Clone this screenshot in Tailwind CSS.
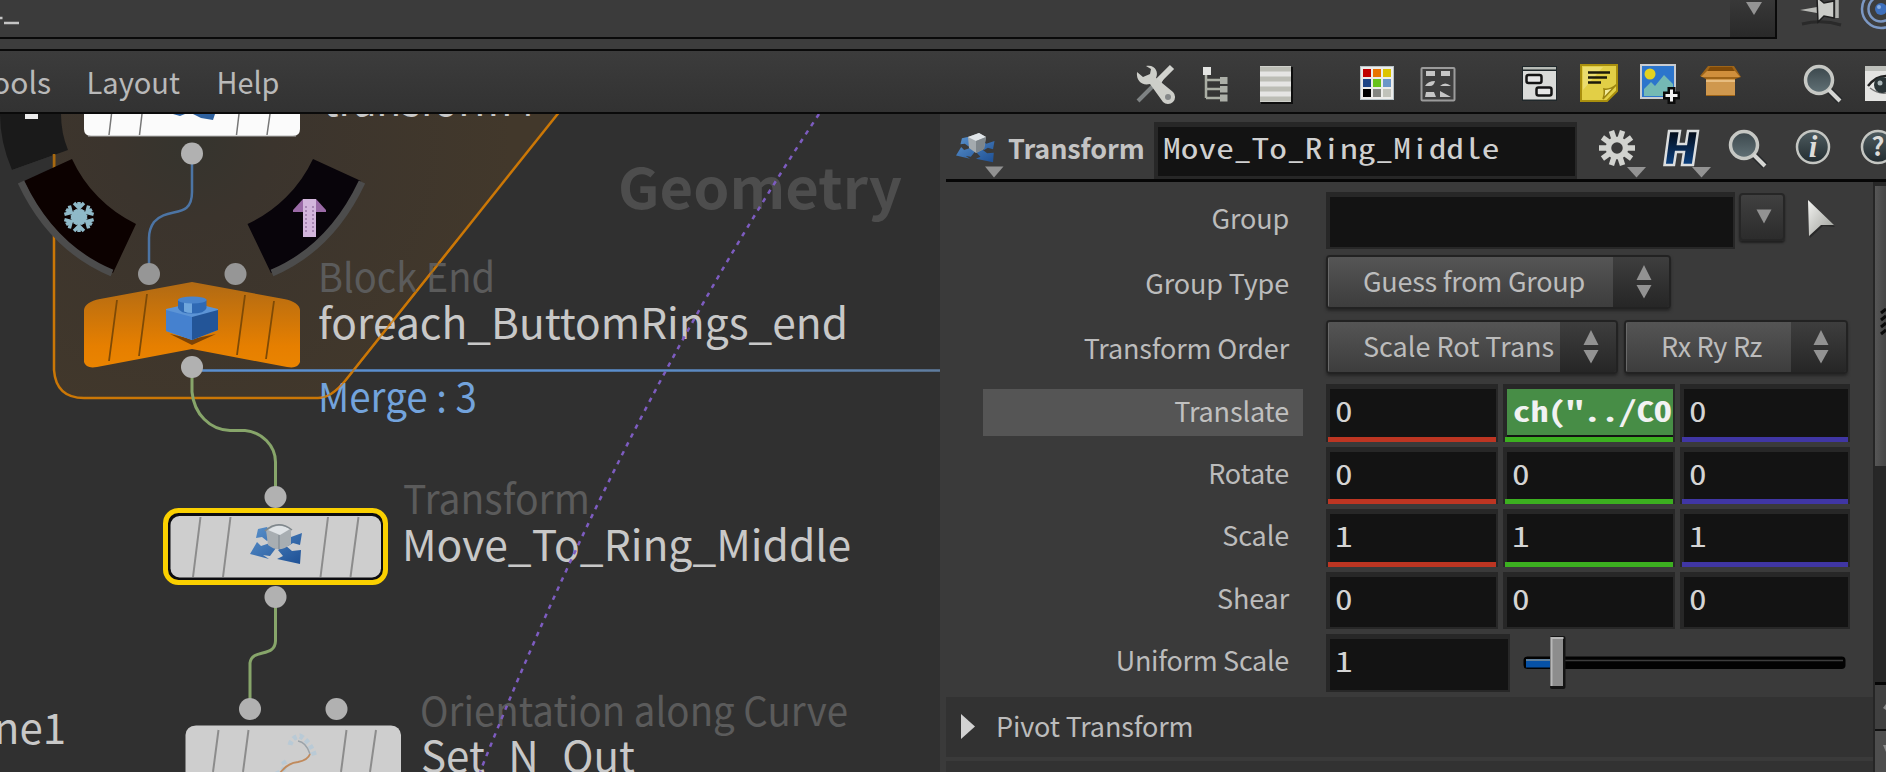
<!DOCTYPE html>
<html lang="en">
<head>
<meta charset="utf-8">
<title>Network editor</title>
<script src="https://cdn.jsdelivr.net/npm/@tailwindcss/browser@4"></script>
</head>
<body class="w-[1886px] h-[772px] overflow-hidden bg-[#303030] flex flex-col font-['Noto_Sans_CJK_SC','Noto_Sans',sans-serif] text-[#bcbcbc]">

<svg class="absolute w-0 h-0">
  <defs>
    <linearGradient id="lens" x1="0" y1="0" x2="0" y2="1"><stop offset="0" stop-color="#3b474c"/><stop offset="1" stop-color="#627277"/></linearGradient>
    <linearGradient id="disc" x1="0" y1="0" x2="0" y2="1"><stop offset="0" stop-color="#4e5c60"/><stop offset="1" stop-color="#222c30"/></linearGradient>
    <linearGradient id="navy" x1="0" y1="0" x2="0" y2="1"><stop offset="0" stop-color="#050c18"/><stop offset="1" stop-color="#0b4080"/></linearGradient>
    <linearGradient id="metal" x1="0" y1="0" x2="1" y2="1"><stop offset="0" stop-color="#f4f4f2"/><stop offset="1" stop-color="#999b95"/></linearGradient>
    <linearGradient id="steel" x1="0" y1="0" x2="1" y2="1"><stop offset="0" stop-color="#5a92cc"/><stop offset="1" stop-color="#1d4f94"/></linearGradient>
    <symbol id="updown" viewBox="0 0 16 34"><path d="M8 0L15.5 15H.5zM.5 20h15L8 33.500z" fill="#929292"/></symbol>
    <symbol id="search" viewBox="0 0 40 40"><path d="M25 25L37 37" stroke="#26282a" stroke-width="7"/><circle cx="16" cy="16" r="13.500" fill="url(#lens)" stroke="#c6c8c4" stroke-width="3.500"/><path d="M25.500 25.500L37 37" stroke="#d4d5d2" stroke-width="4"/></symbol>
    <symbol id="xform" viewBox="0 0 54 42" preserveAspectRatio="none">
      <path d="M8 6L17 4 23 14 17 18 12 14 6 15zM52 10L50 22 43 20 38 23 34 14 38 12 41 14zM0 31L7 19 11 23 20 20 26 25 20 33 13 32 19 36zM50 41L27 36 33 33 28 27 35 22 42 28 51 27z" fill="url(#steel)"/>
    </symbol>
  </defs>
</svg>

<!-- path bar -->
<header class="h-[51px] shrink-0 flex items-start bg-[#3d3d3d] border-b-2 border-[#0a0a0a]">
  <div class="w-[1777px] h-[39px] flex justify-between border-b-2 border-r-2 border-[#0a0a0a] bg-[#3b3b3b] overflow-hidden">
    <svg class="w-6 h-[37px]" viewBox="0 0 24 37"><path d="M0 18h2.500M4 23h15" stroke="#c4c4c4" stroke-width="2.500"/></svg>
    <div class="w-[45px] h-[37px] bg-linear-to-b from-[#383838] to-[#292929] flex justify-center">
      <svg class="w-4 h-4 ml-0.5" viewBox="0 0 16 16"><path d="M0 2h16L8 15z" fill="#939393"/></svg>
    </div>
  </div>
  <svg class="w-[109px] h-[49px] shrink-0" viewBox="1777 0 109 49">
    <path d="M1802 24q20-5 39 1" stroke="#2a2a2a" stroke-width="3" fill="none"/>
    <path d="M1800 10L1817 7v6z" fill="#b9bab6"/>
    <path d="M1817 -3L1824 3 1834 1V18L1824 16 1818 22z" fill="#cbccc8" stroke="#1e1e1e" stroke-width="1.500"/><path d="M1837 0v18" stroke="#b3b4b0" stroke-width="3.500"/>
    <circle cx="1881" cy="9" r="19" fill="none" stroke="#7c98c4" stroke-width="2.500"/><circle cx="1881" cy="9" r="12.500" fill="none" stroke="#7c98c4" stroke-width="2.500"/><circle cx="1881" cy="9" r="6" fill="#3f70bc"/><circle cx="1879" cy="7" r="2" fill="#87aee2"/>
  </svg>
</header>

<!-- menu bar -->
<nav class="h-[63px] shrink-0 flex items-start bg-linear-to-b from-[#3c3c3c] to-[#323232] border-b-2 border-[#0a0a0a]">
  <svg class="w-[1886px] h-[61px]" viewBox="0 51 1886 61">
    <g font-family="'Noto Sans CJK SC','Noto Sans',sans-serif" font-size="30" fill="#b9b9b9">
      <text x="51" y="94" text-anchor="end">Tools</text>
      <text x="86.500" y="94" textLength="93.500" lengthAdjust="spacingAndGlyphs">Layout</text>
      <text x="216.500" y="94" textLength="63" lengthAdjust="spacingAndGlyphs">Help</text>
    </g>
    <!-- wrench and screwdriver -->
    <path d="M1138 101L1153 86" stroke="#7e8283" stroke-width="4"/>
    <path d="M1172 67L1156 83" stroke="#d2d3cf" stroke-width="6"/>
    <path d="M1154 84L1166 74 1160 86z" fill="#d2d3cf"/>
    <path d="M1146 66C1155 64 1159 72 1156 78L1173 92A7 7 0 0 1 1163 102L1150 84C1142 86 1136 81 1137 72L1143 77 1150 74 1151 69z" fill="#cdcec9"/>
    <circle cx="1168" cy="97" r="3" fill="#85888a"/>
    <!-- tree -->
    <path d="M1206 74V98M1206 80h14M1206 89h14M1206 98h14" stroke="#aaaea4" stroke-width="2.500" fill="none"/>
    <rect x="1203" y="67" width="8" height="8" fill="#e3e4e2"/><path d="M1220 77h7.500v7h-7.500zM1220 86h7.500v6.500h-7.500zM1220 94.500h7.500v7h-7.500z" fill="#acafa8"/>
    <!-- list -->
    <rect x="1261" y="67" width="32" height="37" fill="#0e0e0e"/><rect x="1260" y="66" width="31" height="36" fill="#e5e5e3"/>
    <path d="M1260 69h31M1260 79h31M1260 89h31M1260 99h31" stroke="#bcbdb5" stroke-width="5"/>
    <!-- palette -->
    <rect x="1360.500" y="66.500" width="33" height="33" fill="#ececea" stroke="#b9c4c9"/>
    <g>
      <rect x="1363" y="69" width="8" height="8" fill="#c00000"/><rect x="1373" y="69" width="8" height="8" fill="#e87400"/><rect x="1383" y="69" width="8" height="8" fill="#dcc400"/>
      <rect x="1363" y="79" width="8" height="8" fill="#1e4586"/><rect x="1373" y="79" width="8" height="8" fill="#66c21a"/><rect x="1383" y="79" width="8" height="8" fill="#6a96c8"/>
      <rect x="1363" y="89" width="8" height="8" fill="#000"/><rect x="1373" y="89" width="8" height="8" fill="#838580"/><rect x="1383" y="89" width="8" height="8" fill="#c0c2ba"/>
    </g>
    <!-- thumbnails -->
    <rect x="1421.500" y="68" width="33" height="32.500" rx="1" fill="#3e3e3e" stroke="#9b9b9b" stroke-width="2"/>
    <path d="M1426 71h9v5h-9zM1441 71h9v5h-9zM1425 86q3-5 10-5-1 5-5 5zM1440 86q5-5 11 0zM1426 92h8l2 5h-11zM1440 91l11 6h-11z" fill="#c6c6c6"/>
    <!-- network box -->
    <rect x="1522" y="66" width="35" height="35" fill="#20282b"/><rect x="1523" y="67" width="33" height="2.500" fill="#b7bbb6"/><rect x="1523" y="71" width="33" height="28.500" fill="#dadbd9"/>
    <rect x="1526.500" y="75" width="15" height="8" rx="2" fill="#e6e6e6" stroke="#141414" stroke-width="2.500"/><rect x="1536.500" y="87.500" width="15" height="8" rx="2" fill="#e6e6e6" stroke="#141414" stroke-width="2.500"/>
    <!-- sticky note -->
    <path d="M1581 65h36v26l-10 10h-26z" fill="#e2cf46" stroke="#a98f0e" stroke-width="2"/><path d="M1583 67h20L1583 90z" fill="#f0e588" opacity=".6"/><path d="M1603 99q2-6 1-10 6 1 12-4z" fill="#f2eb9d" stroke="#9b8410" stroke-width="1.500"/>
    <path d="M1588 72.500h22M1588 77.500h19M1588 82.500h13" stroke="#1c1a0a" stroke-width="2.500"/>
    <!-- picture -->
    <rect x="1641" y="65" width="34" height="33" fill="#2c75cc" stroke="#c9ccd0" stroke-width="2"/><circle cx="1650" cy="74" r="5.500" fill="#e3d220"/><path d="M1644 96V89L1651 82 1655 86 1664 75 1673 84V96z" fill="#74b9b4"/>
    <path d="M1671.500 87v17M1663 95.500h17" stroke="#0b0b0b" stroke-width="8"/><path d="M1671.500 89.500v12M1665.500 95.500h12" stroke="#f0f0f0" stroke-width="3"/>
    <!-- crate -->
    <path d="M1708 66h26l7 11-6 2v17h-29v-17l-6-3z" fill="#9e6418"/><path d="M1710 67h22l3 5h-28z" fill="#7e4908"/><path d="M1707 71h28l5 6H1701z" fill="#d08f3c"/><rect x="1706" y="79" width="29" height="16" fill="#cf984e"/><path d="M1706 81h29" stroke="#e7bd80" stroke-width="2"/>
    <svg x="1803" y="64" width="40" height="40"><use href="#search"/></svg>
    <!-- eye panel -->
    <rect x="1865" y="66" width="21" height="35" fill="#e4e4e2"/><rect x="1865" y="66" width="21" height="5" fill="#bdbfba"/>
    <path d="M1868 86q8-10 18-10" stroke="#222" stroke-width="2.500" fill="none"/><path d="M1870 88q8 6 16 5" stroke="#777" stroke-width="1.500" fill="none"/><circle cx="1882" cy="85" r="8" fill="#2a3436"/><circle cx="1880" cy="83" r="2.500" fill="#a8b4b6"/>
  </svg>
</nav>

<main class="flex h-[658px]">
  <!-- node graph -->
  <svg class="w-[940px] h-[658px] shrink-0 bg-[#303030]" viewBox="0 114 940 658" font-family="'Noto Sans CJK SC','Noto Sans',sans-serif">
    <defs>
      <radialGradient id="halo" gradientUnits="userSpaceOnUse" cx="192" cy="140" r="320"><stop offset="0" stop-color="#35342e"/><stop offset=".25" stop-color="#3b342d"/><stop offset="1" stop-color="#42382b"/></radialGradient>
      <linearGradient id="orange" x1="0" y1="0" x2="0" y2="1"><stop offset="0" stop-color="#b06a14"/><stop offset=".75" stop-color="#e67f00"/><stop offset="1" stop-color="#ea8400"/></linearGradient>
      <linearGradient id="wire" gradientUnits="userSpaceOnUse" x1="600" y1="0" x2="940" y2="0"><stop offset="0" stop-color="#5a8fd0"/><stop offset="1" stop-color="#5f7c9e"/></linearGradient>
    </defs>

    <path d="M54 100V370Q56 398 84 398H318Q331 398 345 381L568 101z" fill="url(#halo)" stroke="#cb7706" stroke-width="2.500"/>

    <!-- radial menu wedges -->
    <path d="M0 114H61Q61 133 68 150L12 170Q0 142 0 114z" fill="#1a1a1a"/>
    <path d="M12 170L54 155V167L24 181z" fill="#303030"/><path d="M54 154v14" stroke="#a8690f" stroke-width="2.500"/>
    <rect x="25" y="112" width="13" height="7" fill="#ececec"/>
    <path d="M24 181L72 159A134 134 0 0 0 136 224L113 273A188 188 0 0 1 24 181z" fill="#0c0100"/>
    <path d="M21 182Q52 248 112 273" fill="none" stroke="#4c4c4c" stroke-width="7"/>
    <path d="M361 181L313 159A134 134 0 0 1 247.500 224L271 273A188 188 0 0 0 361 181z" fill="#08040a"/>
    <path d="M362 182Q331 248 272 273" fill="none" stroke="#4c4c4c" stroke-width="7"/>

    <!-- freeze -->
    <g stroke="#8fb9c8" stroke-width="3.500" fill="none" transform="translate(79 217)">
      <path id="arm" d="M0 0V-15M-5-14L0-9 5-14M-4-7L0-3 4-7"/>
      <use href="#arm" transform="rotate(60)"/><use href="#arm" transform="rotate(120)"/><use href="#arm" transform="rotate(180)"/><use href="#arm" transform="rotate(240)"/><use href="#arm" transform="rotate(300)"/>
    </g>
    <!-- up arrow -->
    <path d="M303 199h13l10 11v2h-33v-2z" fill="#9a6aa6"/><path d="M303 199h13v38h-13z" fill="#d3b6dc"/><path d="M306 206v28M313 206v28" stroke="#9b7aa6" stroke-width="1.500" stroke-dasharray="2 2"/>

    <path d="M192 160V192C192 220 168 206 154 222Q149 229 149 238V268" fill="none" stroke="#4c74a4" stroke-width="2.500"/>
    <path d="M202 370.500H940" stroke="url(#wire)" stroke-width="2.500"/>
    <path d="M192 375V392C194 414 210 430 230 430.500H245C262 432 275.500 446 275.500 462V490M275.500 605V641C275 658 252 648 250 663V702" fill="none" stroke="#87a56a" stroke-width="3"/>

    <!-- clipped node -->
    <path d="M84 105H300V129Q300 136 293 136H91Q84 136 84 129z" fill="#fbfbfb"/><path d="M88 136H296" stroke="#b5b5b5"/>
    <path d="M111.500 114L109 135M142 114L139.500 135M239 114L236.500 135M270 114L267 135" stroke="#777" stroke-width="1.500"/>
    <path d="M173 114h12l-5 2zM193 114h22l-2 6-12-2z" fill="#2e619f"/>

    <!-- block end node -->
    <path d="M84 310Q85 302 100 299L192 282 284 299Q299 302 300 310V362Q298 369 287 367L192 349 97 367Q86 369 84 362z" fill="url(#orange)"/>
    <path d="M117 300L109 361M147 294L139 356M245 295L237 355M274 301L266 359" stroke="#7e4a06" stroke-width="1.800"/>
    <path d="M170 334L192 345 216 334 192 339z" fill="#7c4306"/>
    <path d="M166 309L179 306 192 304 206 306 218 309V330L192 340 166 331z" fill="#5c94d6"/><path d="M166 310L192 317V340L166 331z" fill="#4581cf"/><path d="M218 310L192 317V340L218 330z" fill="#235598"/>
    <path d="M178 300V308Q180 313.500 192 313.500 205 313.500 206.500 308V300z" fill="#2f69b4"/><path d="M184 302h8v11q-5 0-8-1.500z" fill="#6fa6dd"/><ellipse cx="192.300" cy="300" rx="14.300" ry="3.500" fill="#4a84cb"/>

    <!-- selected transform node -->
    <rect x="165.500" y="510.500" width="220" height="72" rx="13" fill="#0c0c10" stroke="#fad000" stroke-width="5"/>
    <rect x="170.500" y="516" width="210.500" height="61.500" rx="9" fill="#cecece"/>
    <path d="M200.500 517L193 577M230.500 517L223 577M328 517L320.500 577M358.500 517L350.500 577" stroke="#8c8c8c" stroke-width="2"/>
    <svg x="250" y="523" width="54" height="42"><use href="#xform"/></svg>
    <path d="M266 530Q278 519 291 530V544Q279 554 268 545z" fill="#a8aeb2"/><path d="M268 530Q279 522 290 529L280 535z" fill="#dfe3e6"/><path d="M279 535V549" stroke="#8a9298" stroke-width="1.500"/><path d="M265 531Q278 519 292 530" stroke="#7f878c" stroke-width="1.500" fill="none"/>

    <!-- orientation node -->
    <path d="M185.500 780V735Q186 726 196 725.500H391Q400 726 401 735V780z" fill="#cecece"/>
    <path d="M218.500 730L213 772M248.500 730L243 772M346.500 730L341 772M376 730L370 772" stroke="#8c8c8c" stroke-width="2"/>
    <path d="M276 774Q290 768 282 760 M290 745Q292 737 300 736 311 742 315 757" fill="none" stroke="#b9cad6" stroke-width="5" stroke-dasharray="4 3"/><path d="M278 776Q286 763 298 762 308 760 310 754" fill="none" stroke="#c08a5c" stroke-width="1.800"/><path d="M310 754Q306 742 298 741" fill="none" stroke="#9ba3a9" stroke-width="1.500"/>

    <g fill="#b1b1b1"><circle cx="192" cy="153.500" r="11"/><circle cx="149" cy="274" r="11" fill="#969696"/><circle cx="235.500" cy="274" r="11" fill="#969696"/><circle cx="192" cy="367" r="11"/><circle cx="275.500" cy="497" r="11"/><circle cx="275.500" cy="597" r="11"/><circle cx="250" cy="709" r="11"/><circle cx="336.500" cy="709" r="11"/></g>

    <text x="618" y="208.500" font-size="56" font-weight="700" fill="#4d4d4d" textLength="284" lengthAdjust="spacingAndGlyphs">Geometry</text>
    <g font-size="42" fill="#c8c8c8">
      <text x="323" y="116" textLength="212" lengthAdjust="spacingAndGlyphs">transform4</text>
      <text x="318" y="339" textLength="530" lengthAdjust="spacingAndGlyphs">foreach_ButtomRings_end</text>
      <text x="402" y="561" textLength="449" lengthAdjust="spacingAndGlyphs">Move_To_Ring_Middle</text>
      <text x="421" y="772" textLength="214" lengthAdjust="spacingAndGlyphs">Set_N_Out</text>
      <text x="66" y="744" text-anchor="end">Plane1</text>
    </g>
    <g font-size="40" fill="#5b5b5b">
      <text x="318" y="291.500" textLength="177" lengthAdjust="spacingAndGlyphs">Block End</text>
      <text x="403" y="514" textLength="187" lengthAdjust="spacingAndGlyphs">Transform</text>
      <text x="420" y="726" textLength="428" lengthAdjust="spacingAndGlyphs">Orientation along Curve</text>
      <text x="318" y="411.500" fill="#73a3dc" textLength="159" lengthAdjust="spacingAndGlyphs">Merge : 3</text>
    </g>
    <path d="M458 239L345 381Q331 398 318 398" fill="none" stroke="#cb7706" stroke-width="2" opacity=".75"/>
    <path d="M819 114Q624 409 480 772" fill="none" stroke="#7d5cc0" stroke-width="2.500" stroke-dasharray="4.500 5.500"/>
  </svg>

  <!-- parameter panel -->
  <section class="w-[946px] flex flex-col bg-[#3a3a3a]">
    <div class="ml-1.5 h-[68px] shrink-0 flex items-start border-b-[3px] border-[#060606]">
      <svg class="w-[62px] h-[65px] shrink-0" viewBox="946 114 62 65">
        <svg x="956" y="134" width="40" height="29"><use href="#xform"/></svg>
        <path d="M968 137L979 133 986 137 984 149 976 153 969 148z" fill="#a3aaae"/><path d="M968 137L979 133 986 137 976 141z" fill="#dfe4e7"/><path d="M976 141L986 137 984 149 976 153z" fill="#7e868b"/>
        <path d="M985 166.500h18.500L994 177.500z" fill="#929292"/>
      </svg>
      <div class="w-[146px] pt-[13px] text-[27px] leading-[42px] font-bold text-[#c4c4c4] tracking-[-0.1px]">Transform</div>
      <div class="w-[423px] h-[57px] mt-2 pl-1 pt-[5px] pr-0.5 pb-[3px] bg-[#272727]">
        <div class="h-full bg-[#131313] pl-[5px] font-['Noto_Sans_Mono_CJK_SC','DejaVu_Sans_Mono','Liberation_Mono',monospace] text-[28px] leading-[41px] text-[#d0d0d0] whitespace-nowrap"><span class="inline-block origin-left scale-x-[1.265]">Move_To_Ring_Middle</span></div>
      </div>
      <svg class="w-[309px] h-[65px] shrink-0" viewBox="1577 114 309 65">
        <g stroke="#d2d3cf" stroke-width="5.500" transform="translate(1617 148)">
          <path id="tooth" d="M0-9V-18" transform="rotate(18)"/><use href="#tooth" transform="rotate(36)"/><use href="#tooth" transform="rotate(72)"/><use href="#tooth" transform="rotate(108)"/><use href="#tooth" transform="rotate(144)"/><use href="#tooth" transform="rotate(180)"/><use href="#tooth" transform="rotate(216)"/><use href="#tooth" transform="rotate(252)"/><use href="#tooth" transform="rotate(288)"/><use href="#tooth" transform="rotate(324)"/>
          <circle r="8.500" fill="none"/>
        </g>
        <path d="M1627 167h19L1636.500 177.500z" fill="#939393"/>
        <path d="M1669 131H1680L1678 144H1686L1688 131H1698L1693 165H1682L1684 152H1676L1674 165H1664.500z" fill="url(#navy)" stroke="#dcdedf" stroke-width="2.500"/>
        <path d="M1692 167h19L1701.500 177.500z" fill="#939393"/>
        <svg x="1728" y="129" width="40" height="40"><use href="#search"/></svg>
        <circle cx="1813" cy="147" r="16" fill="url(#disc)" stroke="#c4c6c2" stroke-width="2.500"/>
        <text x="1813" y="157" text-anchor="middle" font-family="'Liberation Serif',serif" font-weight="700" font-style="italic" font-size="31" fill="#dcdcda">i</text>
        <circle cx="1878" cy="147" r="16" fill="url(#disc)" stroke="#c4c6c2" stroke-width="2.500"/>
        <text x="1878" y="156" text-anchor="middle" font-family="'Noto Sans CJK SC',sans-serif" font-weight="700" font-size="25" fill="#dcdcda">?</text>
      </svg>
    </div>

    <div class="flex flex-1 min-h-0">
      <div class="w-[933px] flex flex-col text-[27px] tracking-[-0.15px]">
        <!-- group -->
        <div class="mt-[10px] h-[57px] shrink-0 flex">
          <div class="w-[349px] mr-[37px] text-right leading-[52px]">Group</div>
          <div class="w-[409px] pl-1 pt-[5px] pr-0.5 pb-0.5 bg-[#272727]"><div class="h-full bg-[#131313]"></div></div>
          <div class="ml-1 mt-px w-[46px] h-[48px] rounded-sm border-2 border-[#262626] shadow-[0_2px_2px_#202020] bg-linear-to-b from-[#404040] to-[#2c2c2c] flex justify-center">
            <svg class="w-4 h-[30px] mt-2 ml-[3px]" viewBox="0 0 16 30"><path d="M.500 6.500h15L8 20.500z" fill="#929292"/></svg>
          </div>
          <svg class="ml-[22px] mt-[7px] w-8 h-10" viewBox="0 0 32 40"><path d="M2 3L28 28 16 27 3 39z" fill="#222" opacity=".7"/><path d="M1 1L27 26 14 26 2 37z" fill="url(#metal)"/></svg>
        </div>
        <!-- group type -->
        <div class="mt-1.5 h-[54px] shrink-0 flex">
          <div class="w-[349px] mr-[37px] text-right leading-[56px]">Group Type</div>
          <div class="w-[345px] rounded-sm border-2 border-[#222] shadow-[0_2px_3px_#262626] flex overflow-hidden">
            <div class="w-[285px] pl-[34px] leading-[47px] tracking-[-0.25px] whitespace-nowrap bg-linear-to-b from-[#555] to-[#3d3d3d] border-l border-[#6a6a6a]">Guess from Group</div>
            <div class="flex-1 flex items-center justify-center bg-linear-to-b from-[#3e3e3e] to-[#262626]"><svg class="w-4 h-[34px] ml-[5px]"><use href="#updown"/></svg></div>
          </div>
        </div>
        <!-- transform order -->
        <div class="mt-[11px] h-[54px] shrink-0 flex">
          <div class="w-[349px] mr-[37px] text-right leading-[56px]">Transform Order</div>
          <div class="w-[292px] rounded-sm border-2 border-[#222] shadow-[0_2px_3px_#262626] flex overflow-hidden">
            <div class="w-[232px] pl-[34px] leading-[47px] tracking-normal whitespace-nowrap bg-linear-to-b from-[#555] to-[#3d3d3d] border-l border-[#6a6a6a]">Scale Rot Trans</div>
            <div class="flex-1 flex items-center justify-center bg-linear-to-b from-[#3e3e3e] to-[#262626]"><svg class="w-4 h-[34px] ml-[5px]"><use href="#updown"/></svg></div>
          </div>
          <div class="ml-1.5 w-[224px] rounded-sm border-2 border-[#222] shadow-[0_2px_3px_#262626] flex overflow-hidden">
            <div class="w-[165px] pl-[34px] leading-[47px] tracking-[-0.3px] whitespace-nowrap bg-linear-to-b from-[#555] to-[#3d3d3d] border-l border-[#6a6a6a]">Rx Ry Rz</div>
            <div class="flex-1 flex items-center justify-center bg-linear-to-b from-[#3e3e3e] to-[#262626]"><svg class="w-4 h-[34px] ml-[5px]"><use href="#updown"/></svg></div>
          </div>
        </div>

        <div class="mt-[10px] flex flex-col gap-[5px]">
          <!-- translate -->
          <div class="h-[57.5px] shrink-0 flex">
            <div class="ml-[43px] mt-[5px] w-[320px] h-[47px] mr-[23px] pr-[14px] bg-[#555] text-right leading-[43px] text-[#c0c0c0]">Translate</div>
            <div class="flex gap-[5px] tracking-normal font-['Noto_Sans_Mono_CJK_SC','DejaVu_Sans_Mono','Liberation_Mono',monospace] text-[28px] leading-[43px] text-[#d4d4d4]">
              <div class="w-[172px] pl-1 pt-[5px] pr-0.5 bg-[#272727] flex flex-col"><div class="flex-1 bg-[#131313] pl-[5px]"><span class="inline-block origin-left scale-x-[1.26]">0</span></div><div class="h-[5px] -ml-0.5 bg-[#bd3522]"></div></div>
              <div class="w-[172px] pl-1 pt-[5px] pr-0.5 bg-[#272727] flex flex-col"><div class="flex-1 border-b-2 border-[#131313] bg-[#478d46] pl-[6px] overflow-hidden font-bold text-[#f2f2f2] whitespace-nowrap"><span class="inline-block origin-left scale-x-[1.26]">ch("../CO</span></div><div class="h-[5px] -ml-0.5 bg-[#3cb020]"></div></div>
              <div class="w-[170px] pl-1 pt-[5px] pr-0.5 bg-[#272727] flex flex-col"><div class="flex-1 bg-[#131313] pl-[5px]"><span class="inline-block origin-left scale-x-[1.26]">0</span></div><div class="h-[5px] -ml-0.5 bg-[#4036a4]"></div></div>
            </div>
          </div>
          <!-- rotate -->
          <div class="h-[57.5px] shrink-0 flex">
            <div class="w-[349px] mr-[37px] text-right leading-[52px]">Rotate</div>
            <div class="flex gap-[5px] tracking-normal font-['Noto_Sans_Mono_CJK_SC','DejaVu_Sans_Mono','Liberation_Mono',monospace] text-[28px] leading-[43px] text-[#d4d4d4]">
              <div class="w-[172px] pl-1 pt-[5px] pr-0.5 bg-[#272727] flex flex-col"><div class="flex-1 bg-[#131313] pl-[5px]"><span class="inline-block origin-left scale-x-[1.26]">0</span></div><div class="h-[5px] -ml-0.5 bg-[#bd3522]"></div></div>
              <div class="w-[172px] pl-1 pt-[5px] pr-0.5 bg-[#272727] flex flex-col"><div class="flex-1 bg-[#131313] pl-[5px]"><span class="inline-block origin-left scale-x-[1.26]">0</span></div><div class="h-[5px] -ml-0.5 bg-[#3cb020]"></div></div>
              <div class="w-[170px] pl-1 pt-[5px] pr-0.5 bg-[#272727] flex flex-col"><div class="flex-1 bg-[#131313] pl-[5px]"><span class="inline-block origin-left scale-x-[1.26]">0</span></div><div class="h-[5px] -ml-0.5 bg-[#4036a4]"></div></div>
            </div>
          </div>
          <!-- scale -->
          <div class="h-[57.5px] shrink-0 flex">
            <div class="w-[349px] mr-[37px] text-right leading-[52px]">Scale</div>
            <div class="flex gap-[5px] tracking-normal font-['Noto_Sans_Mono_CJK_SC','DejaVu_Sans_Mono','Liberation_Mono',monospace] text-[28px] leading-[43px] text-[#d4d4d4]">
              <div class="w-[172px] pl-1 pt-[5px] pr-0.5 bg-[#272727] flex flex-col"><div class="flex-1 bg-[#131313] pl-[5px]"><span class="inline-block origin-left scale-x-[1.26]">1</span></div><div class="h-[5px] -ml-0.5 bg-[#bd3522]"></div></div>
              <div class="w-[172px] pl-1 pt-[5px] pr-0.5 bg-[#272727] flex flex-col"><div class="flex-1 bg-[#131313] pl-[5px]"><span class="inline-block origin-left scale-x-[1.26]">1</span></div><div class="h-[5px] -ml-0.5 bg-[#3cb020]"></div></div>
              <div class="w-[170px] pl-1 pt-[5px] pr-0.5 bg-[#272727] flex flex-col"><div class="flex-1 bg-[#131313] pl-[5px]"><span class="inline-block origin-left scale-x-[1.26]">1</span></div><div class="h-[5px] -ml-0.5 bg-[#4036a4]"></div></div>
            </div>
          </div>
          <!-- shear -->
          <div class="h-[57.5px] shrink-0 flex">
            <div class="w-[349px] mr-[37px] text-right leading-[52px]">Shear</div>
            <div class="flex gap-[5px] tracking-normal font-['Noto_Sans_Mono_CJK_SC','DejaVu_Sans_Mono','Liberation_Mono',monospace] text-[28px] leading-[43px] text-[#d4d4d4]">
              <div class="w-[172px] pl-1 pt-[5px] pr-0.5 pb-0.5 bg-[#272727]"><div class="h-full bg-[#131313] pl-[5px]"><span class="inline-block origin-left scale-x-[1.26]">0</span></div></div>
              <div class="w-[172px] pl-1 pt-[5px] pr-0.5 pb-0.5 bg-[#272727]"><div class="h-full bg-[#131313] pl-[5px]"><span class="inline-block origin-left scale-x-[1.26]">0</span></div></div>
              <div class="w-[170px] pl-1 pt-[5px] pr-0.5 pb-0.5 bg-[#272727]"><div class="h-full bg-[#131313] pl-[5px]"><span class="inline-block origin-left scale-x-[1.26]">0</span></div></div>
            </div>
          </div>
          <!-- uniform scale -->
          <div class="h-[57.5px] shrink-0 flex">
            <div class="w-[349px] mr-[37px] text-right leading-[52px] tracking-[-0.3px]">Uniform Scale</div>
            <div class="w-[184px] pl-1 pt-[5px] pr-0.5 pb-0.5 bg-[#272727] tracking-normal font-['Noto_Sans_Mono_CJK_SC','DejaVu_Sans_Mono','Liberation_Mono',monospace] text-[28px] leading-[43px] text-[#d4d4d4]"><div class="h-full bg-[#131313] pl-[5px]"><span class="inline-block origin-left scale-x-[1.26]">1</span></div></div>
            <svg class="ml-3 w-[326px] h-[57px]" viewBox="1522 634 326 57">
              <rect x="1523.500" y="656.500" width="322" height="12.500" rx="4" fill="#020202"/><path d="M1565 660.500h278" stroke="#3c3c3c" stroke-width="1.500"/>
              <rect x="1526" y="659" width="25" height="8.500" fill="#0651a6"/><path d="M1526 660h25" stroke="#5f7f9c" stroke-width="2"/>
              <rect x="1550" y="636" width="15.500" height="53" rx="2" fill="#141414"/><rect x="1550.500" y="637" width="12.500" height="49" fill="#8d8d8d"/><path d="M1551.500 686V638h12" fill="none" stroke="#b8b8b8" stroke-width="2"/>
            </svg>
          </div>
        </div>

        <div class="ml-1.5 mt-[5px] h-[60px] shrink-0 flex items-center bg-[#323232]">
          <svg class="ml-[14px] w-[16px] h-[26px]" viewBox="0 0 16 26"><path d="M1 0L15 12.500 1 25z" fill="#d2d2d2"/></svg>
          <span class="ml-5 leading-[57px] h-[60px]">Pivot Transform</span>
        </div>
        <div class="ml-1.5 mt-[4px] flex-1 bg-[#323232]"></div>
      </div>

      <!-- scrollbar -->
      <div class="w-[13px] flex flex-col bg-[#272727] border-l-2 border-[#262626]">
        <div class="mt-1 h-[280px] bg-linear-to-r from-[#565656] to-[#464646] flex flex-col items-end">
          <svg class="mt-[122px] w-[6px] h-[30px]" viewBox="0 0 6 30"><path d="M1 5L6 1M1 12L6 8M1 19L6 15M1 26L6 22" stroke="#0a0a0a" stroke-width="3"/></svg>
        </div>
        <div class="flex-1"></div>
        <div class="h-[90px] bg-[#404040] border-t-[3px] border-[#060606] flex flex-col">
          <div class="flex-1 flex items-center justify-end"><svg class="w-[3px] h-[6px]" viewBox="0 0 3 6"><path d="M0 4L3 0v6z" fill="#8a8a8a"/></svg></div>
          <div class="h-[43px] flex justify-end pt-[14px] bg-[#4e4e4e] border-t-2 border-[#101010]"><svg class="w-[3px] h-[7px]" viewBox="0 0 3 7"><path d="M0 0h3v7z" fill="#8a8a8a"/></svg></div>
        </div>
      </div>
    </div>
  </section>
</main>
</body>
</html>
